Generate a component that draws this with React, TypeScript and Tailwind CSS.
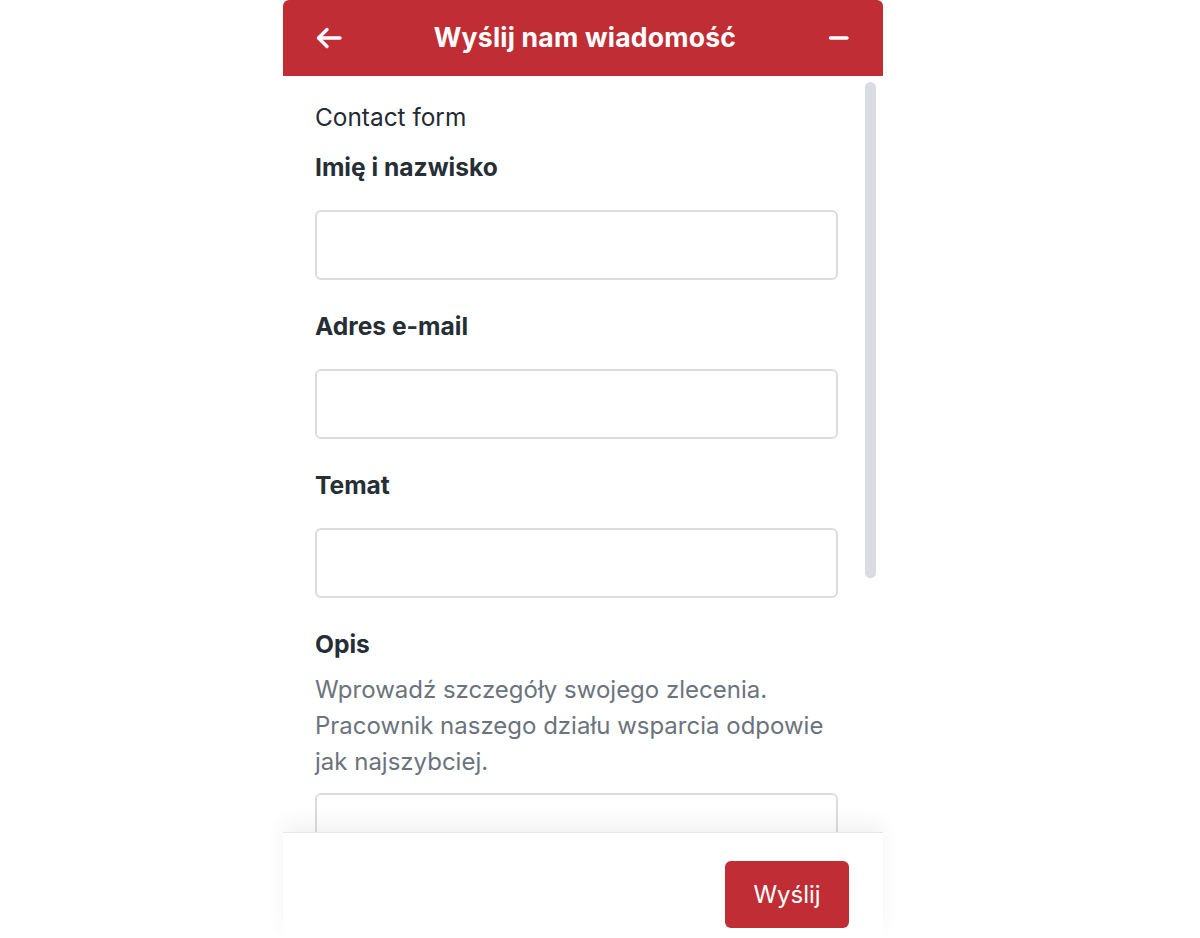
import React from "react";

const font = { fontFamily: 'Inter, "Noto Sans", sans-serif' };

function Field({ label }: { label: string }) {
  return (
    <div className="flex flex-col">
      <label className="text-[24.6px] leading-[36px] font-bold text-[#262e36] mb-[25px]">{label}</label>
      <div className="h-[70px] rounded-[6px] border-2 border-[#dcdcdc] bg-white mb-[28px]" />
    </div>
  );
}

export default function App() {
  return (
    <div className="w-[1200px] h-[938px] bg-white flex overflow-hidden" style={font}>
      <div className="w-[600px] h-[938px] ml-[283px] flex flex-col bg-white">
        <div className="h-[76px] shrink-0 bg-[#c12d34] rounded-t-[6px] flex items-center justify-between px-[32px] text-white">
          <svg width="28" height="24" viewBox="0 0 28 24" fill="none" stroke="white" strokeWidth="3.4" strokeLinecap="round" strokeLinejoin="round">
            <path d="M25 12H4" />
            <path d="M12 3.5L3.5 12L12 20.5" />
          </svg>
          <div className="text-[26.6px] font-bold tracking-[0.2px]">Wyślij nam wiadomość</div>
          <svg width="24" height="24" viewBox="0 0 24 24" fill="none" stroke="white" strokeWidth="3.4" strokeLinecap="round">
            <path d="M3.5 12H20" />
          </svg>
        </div>
        <div className="relative flex-1 overflow-hidden">
          <div className="w-[587px] px-[32px] pt-[23px] flex flex-col">
            <div className="text-[24.4px] leading-[36px] text-[#232a31] mb-[14px]">Contact form</div>
            <Field label="Imię i nazwisko" />
            <Field label="Adres e-mail" />
            <Field label="Temat" />
            <label className="text-[24.6px] leading-[36px] font-bold text-[#262e36] mb-[10px]">Opis</label>
            <p className="text-[24px] leading-[36px] text-[#6b737c] mb-[13px]">
              Wprowadź szczegóły swojego zlecenia. Pracownik naszego działu wsparcia odpowie jak najszybciej.
            </p>
            <div className="h-[140px] rounded-[6px] border-2 border-[#dcdcdc] bg-white" />
          </div>
          <div className="absolute left-[582px] top-[6px] w-[11px] h-[496px] rounded-full bg-[#d9dde1]" />
        </div>
        <div className="h-[106px] shrink-0 border-t border-[#e6e6e6] bg-white shadow-[0_-10px_18px_rgba(0,0,0,0.05)] flex justify-end items-start pt-[28px] pr-[34px] relative z-10">
          <button className="w-[124px] h-[67px] rounded-[6px] bg-[#c12d34] text-white text-[24px]">Wyślij</button>
        </div>
      </div>
    </div>
  );
}
